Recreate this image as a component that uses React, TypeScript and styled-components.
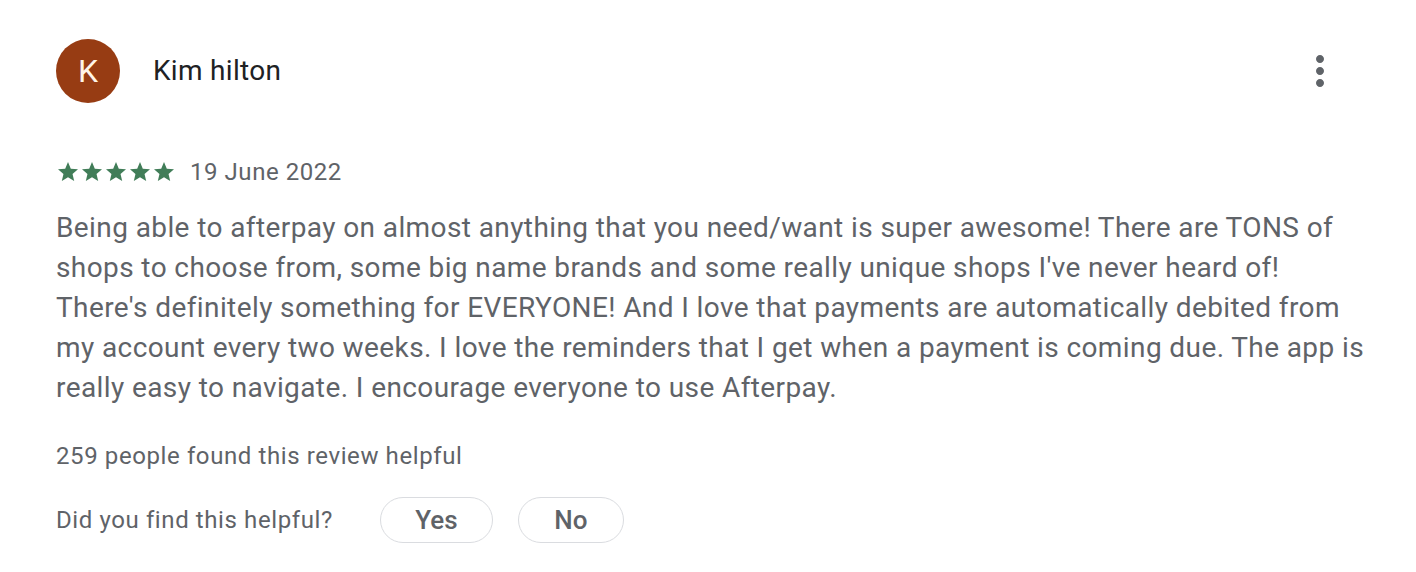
import React from 'react';
import styled, { createGlobalStyle } from 'styled-components';

const GlobalStyle = createGlobalStyle`
  body {
    margin: 0;
    background: #fff;
    font-family: Roboto, 'Liberation Sans', Arial, sans-serif;
  }
`;

const Card = styled.div`
  padding: 39px 47px 0 56px;
`;

const Header = styled.div`
  display: flex;
  align-items: center;
  height: 64px;
`;

const Avatar = styled.div`
  width: 64px;
  height: 64px;
  border-radius: 50%;
  background: #973c13;
  color: #fff4e8;
  display: flex;
  align-items: center;
  justify-content: center;
  font-size: 32px;
  flex-shrink: 0;
`;

const Name = styled.div`
  margin-left: 33px;
  flex: 1;
  font-size: 28px;
  line-height: 40px;
  letter-spacing: 0.3px;
  color: #202124;
`;

const MenuButton = styled.button`
  width: 48px;
  height: 48px;
  margin-right: 25px;
  padding: 0;
  border: none;
  background: transparent;
  display: flex;
  align-items: center;
  justify-content: center;
  cursor: pointer;
`;

const RatingRow = styled.div`
  display: flex;
  align-items: center;
  margin-top: 53px;
  height: 32px;
`;

const Stars = styled.div`
  display: flex;
  margin-right: 14px;
`;

const DateText = styled.span`
  font-size: 24px;
  line-height: 32px;
  letter-spacing: 0.55px;
  color: #5f6368;
`;

const Body = styled.p`
  margin: 20px 0 0;
  font-size: 28px;
  line-height: 40px;
  letter-spacing: 0.4px;
  color: #5f6368;
`;

const HelpfulCount = styled.div`
  margin-top: 32px;
  font-size: 24px;
  line-height: 32px;
  letter-spacing: 0.6px;
  color: #5f6368;
`;

const Feedback = styled.div`
  display: flex;
  align-items: center;
  margin-top: 25px;
`;

const Question = styled.span`
  font-size: 24px;
  line-height: 32px;
  letter-spacing: 0.6px;
  color: #5f6368;
  margin-right: 47px;
`;

const Pill = styled.button<{ $width: number }>`
  width: ${(p) => p.$width}px;
  height: 46px;
  margin-right: 25px;
  border: 1px solid #dadce0;
  border-radius: 23px;
  background: #fff;
  font-family: Roboto, 'Liberation Sans', Arial, sans-serif;
  font-size: 26px;
  font-weight: 500;
  color: #5f6368;
  cursor: pointer;
  padding: 0;
`;

const Star = () => (
  <svg width="24" height="24" viewBox="0 0 24 24">
    <path
      fill="#417d58"
      d="M12 17.27L18.18 21l-1.64-7.03L22 9.24l-7.19-.61L12 2 9.19 8.63 2 9.24l5.46 4.73L5.82 21z"
    />
  </svg>
);

const review =
  "Being able to afterpay on almost anything that you need/want is super awesome! There are TONS of shops to choose from, some big name brands and some really unique shops I've never heard of! There's definitely something for EVERYONE! And I love that payments are automatically debited from my account every two weeks. I love the reminders that I get when a payment is coming due. The app is really easy to navigate. I encourage everyone to use Afterpay.";

const App = () => {
  return (
    <>
      <GlobalStyle />
      <Card>
        <Header>
          <Avatar>K</Avatar>
          <Name>Kim hilton</Name>
          <MenuButton aria-label="More">
            <svg width="48" height="48" viewBox="0 0 24 24">
              <path
                fill="#5f6368"
                d="M12 8c1.1 0 2-.9 2-2s-.9-2-2-2-2 .9-2 2 .9 2 2 2zm0 2c-1.1 0-2 .9-2 2s.9 2 2 2 2-.9 2-2-.9-2-2-2zm0 6c-1.1 0-2 .9-2 2s.9 2 2 2 2-.9 2-2-.9-2-2-2z"
              />
            </svg>
          </MenuButton>
        </Header>
        <RatingRow>
          <Stars>
            {[0, 1, 2, 3, 4].map((i) => (
              <Star key={i} />
            ))}
          </Stars>
          <DateText>19 June 2022</DateText>
        </RatingRow>
        <Body>{review}</Body>
        <HelpfulCount>259 people found this review helpful</HelpfulCount>
        <Feedback>
          <Question>Did you find this helpful?</Question>
          <Pill $width={113}>Yes</Pill>
          <Pill $width={106}>No</Pill>
        </Feedback>
      </Card>
    </>
  );
};

export default App;
